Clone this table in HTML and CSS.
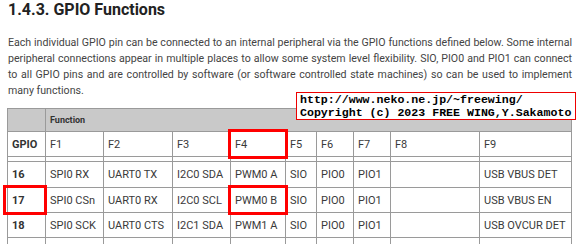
FILE: index.html
```html
<!DOCTYPE html>
<html>
<head>
<meta charset="utf-8">
<link rel="stylesheet" href="styles.css">
</head>
<body>
<h3 class="title">1.4.3. GPIO Functions</h3>
<p class="intro">Each individual GPIO pin can be connected to an internal peripheral via the GPIO functions defined below. Some internal peripheral connections appear in multiple places to allow some system level flexibility. SIO, PIO0 and PIO1 can connect to all GPIO pins and are controlled by software (or software controlled state machines) so can be used to implement many functions.</p>
<div class="wrap">
<table class="gpio">
<colgroup>
<col class="c0"><col class="c1"><col class="c2"><col class="c3"><col class="c4"><col class="c5"><col class="c6"><col class="c7"><col class="c8"><col class="c9">
</colgroup>
<thead>
<tr class="h1"><th class="grey"></th><th class="grey fn" colspan="9">Function</th></tr>
<tr class="h2"><th class="gp">GPIO</th><th>F1</th><th>F2</th><th>F3</th><th class="rel">F4<span class="mark"></span></th><th>F5</th><th>F6</th><th>F7</th><th>F8</th><th>F9</th></tr>
<tr class="sep"><td></td><td></td><td></td><td></td><td></td><td></td><td></td><td></td><td></td><td></td></tr>
</thead>
<tbody>
<tr class="r16"><td class="gp">16</td><td>SPI0 RX</td><td>UART0 TX</td><td>I2C0 SDA</td><td>PWM0 A</td><td>SIO</td><td>PIO0</td><td>PIO1</td><td></td><td>USB VBUS DET</td></tr>
<tr><td class="gp rel">17<span class="mark m17"></span></td><td>SPI0 CSn</td><td>UART0 RX</td><td>I2C0 SCL</td><td class="rel">PWM0 B<span class="mark"></span></td><td>SIO</td><td>PIO0</td><td>PIO1</td><td></td><td>USB VBUS EN</td></tr>
<tr><td class="gp">18</td><td>SPI0 SCK</td><td>UART0 CTS</td><td>I2C1 SDA</td><td>PWM1 A</td><td>SIO</td><td>PIO0</td><td>PIO1</td><td></td><td>USB OVCUR DET</td></tr>
<tr><td></td><td></td><td></td><td></td><td></td><td></td><td></td><td></td><td></td><td></td></tr>
</tbody>
</table>
<div class="stamp">http://www.neko.ne.jp/~freewing/<br>Copyright (c) 2023 FREE WING,Y.Sakamoto</div>
</div>
</body>
</html>
```
FILE: styles.css
```css
html, body {
  margin: 0;
  padding: 0;
  background: #fff;
}
body {
  padding: 0 8px;
  font-family: Roboto, "Liberation Sans", sans-serif;
  color: #404040;
}
.title {
  margin: 0;
  font-size: 16px;
  line-height: 20px;
  font-weight: 700;
  color: #222;
}
.intro {
  margin: 15px 0 9px 0;
  font-size: 10.62px;
  line-height: 16px;
  text-align: justify;
  color: #444;
}
.wrap {
  position: relative;
}
.gpio {
  border-collapse: collapse;
  table-layout: fixed;
  width: 565px;
  margin-left: -1px;
  font-size: 11px;
  color: #3a3a3a;
}
.c0 { width: 38px; }
.c1 { width: 58px; }
.c2 { width: 69px; }
.c3 { width: 58px; }
.c4 { width: 55px; }
.c5 { width: 31px; }
.c6 { width: 37px; }
.c7 { width: 37px; }
.c8 { width: 89px; }
.c9 { width: 92px; }
.gpio th, .gpio td {
  border: 1px solid #9a9a9a;
  padding: 0 4px;
  text-align: left;
  vertical-align: middle;
  white-space: nowrap;
  font-weight: 400;
}
.gpio .grey {
  background: #c9c9c9;
}
.gpio .fn {
  font-size: 9px;
  font-weight: 700;
  color: #333;
}
.gpio .gp {
  font-weight: 700;
  color: #333;
}
.h1 { height: 23px; }
.h2 { height: 25px; }
.sep { height: 5px; }
.sep td { padding: 0; font-size: 0; line-height: 0; }
.gpio tbody tr { height: 25px; }
.gpio tbody tr.r16 { height: 26px; }
.rel { position: relative; }
.mark {
  position: absolute;
  top: -3px;
  bottom: -3px;
  left: -3px;
  right: -3px;
  border: 3px solid #ff0000;
}
.mark.m17 {
  left: -5px;
  right: -2px;
}
.stamp {
  position: absolute;
  top: -16px;
  left: 288px;
  width: 272px;
  padding: 0 3px;
  background: #fff;
  border: 1px solid #e00;
  font-family: "Liberation Mono", "DejaVu Sans Mono", monospace;
  font-weight: 700;
  font-size: 11.6px;
  line-height: 13px;
  color: #000;
  white-space: nowrap;
}
```
